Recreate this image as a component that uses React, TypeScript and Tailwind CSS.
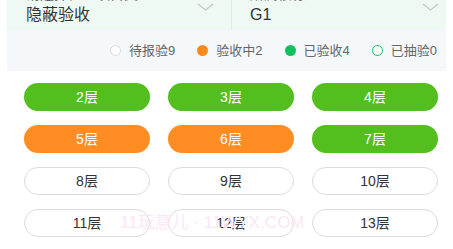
import React from "react";

const Chevron = () => (
  <svg width="17" height="8" viewBox="0 0 17 8" fill="none">
    <path d="M1 1 L8.5 7 L16 1" stroke="#c4c9c6" strokeWidth="1.3" />
  </svg>
);

type F = { n: number; s: "green" | "orange" | "white" };
const floors: F[] = [
  { n: 2, s: "green" },
  { n: 3, s: "green" },
  { n: 4, s: "green" },
  { n: 5, s: "orange" },
  { n: 6, s: "orange" },
  { n: 7, s: "green" },
  { n: 8, s: "white" },
  { n: 9, s: "white" },
  { n: 10, s: "white" },
  { n: 11, s: "white" },
  { n: 12, s: "white" },
  { n: 13, s: "white" },
];

const cls: Record<F["s"], string> = {
  green: "bg-[#53bf1f] text-white",
  orange: "bg-[#ff8d23] text-white",
  white: "bg-white border border-[#dcdcdc] text-[#333]",
};

export default function App() {
  return (
    <div className="relative w-[453px] h-[249px] overflow-hidden bg-white font-['Liberation_Sans','Noto_Sans_CJK_SC',sans-serif]">
      <div className="mx-[7px]">
        <div className="flex h-[30px] bg-[#eff9f3]">
          <div className="relative w-[225px] border-r border-[#e2ebe6]">
            <div className="absolute left-[19px] top-[-14px] text-[14px] leading-[16px] text-[#666]">请选择检查项目类型</div>
            <div className="absolute left-[19px] top-[5px] text-[16px] leading-[20px] text-[#333]">隐蔽验收</div>
            <div className="absolute left-[190px] top-[3px]"><Chevron /></div>
          </div>
          <div className="relative flex-1">
            <div className="absolute left-[18px] top-[-14px] text-[14px] leading-[16px] text-[#666]">所属楼栋</div>
            <div className="absolute left-[18px] top-[5px] text-[16px] leading-[20px] text-[#333]">G1</div>
            <div className="absolute left-[190px] top-[3px]"><Chevron /></div>
          </div>
        </div>
        <div className="flex h-[41px] items-center justify-end gap-[22px] bg-[#f5f8fb] pr-[9px] text-[13px] text-[#666]">
          <div className="flex items-center gap-[8px]">
            <span className="h-[11px] w-[11px] rounded-full border border-[#d9d9d9] bg-white" />
            <span>待报验9</span>
          </div>
          <div className="flex items-center gap-[8px]">
            <span className="h-[11px] w-[11px] rounded-full bg-[#ff8a1c]" />
            <span>验收中2</span>
          </div>
          <div className="flex items-center gap-[8px]">
            <span className="h-[11px] w-[11px] rounded-full bg-[#14c05e]" />
            <span>已验收4</span>
          </div>
          <div className="flex items-center gap-[8px]">
            <span className="h-[11px] w-[11px] rounded-full border border-[#14c05e] bg-white" />
            <span>已抽验0</span>
          </div>
        </div>
      </div>
      <div className="mt-[12px] grid grid-cols-[126px_126px_126px] gap-x-[18px] gap-y-[14px] pl-[24px]">
        {floors.map((f) => (
          <div
            key={f.n}
            className={`flex h-[28px] items-center justify-center rounded-full text-[14px] ${cls[f.s]}`}
          >
            {f.n}层
          </div>
        ))}
      </div>
      <div className="pointer-events-none absolute left-[120px] top-[211px] text-[17px] leading-[24px] text-[#fde6f6]">
        11玩意儿 · 11WYX.COM
      </div>
    </div>
  );
}
